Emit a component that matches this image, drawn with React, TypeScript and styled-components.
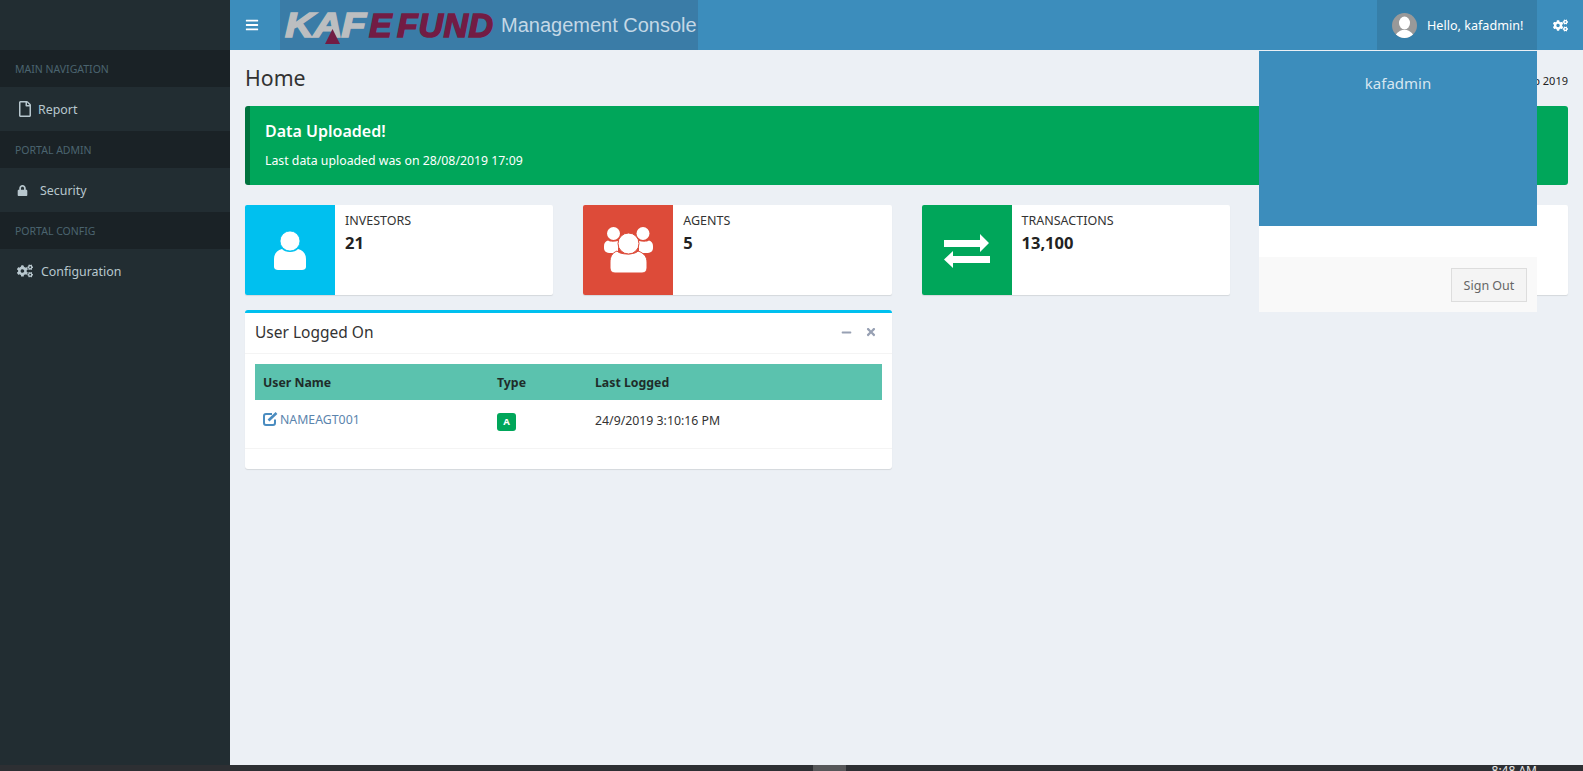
import React from "react";
import styled, { createGlobalStyle } from "styled-components";
import { FaBars, FaCogs, FaLock, FaMinus, FaRegFile, FaTimes } from "react-icons/fa";

const Global = createGlobalStyle`
  html, body { margin: 0; padding: 0; height: 100%; overflow: hidden; }
  body {
    font-family: "Noto Sans", "Open Sans", sans-serif;
    font-size: 13px;
    color: #333;
    background: #ecf0f5;
  }
  * { box-sizing: border-box; }
`;

const Page = styled.div`
  width: 1583px;
  height: 771px;
  display: flex;
  flex-direction: column;
  overflow: hidden;
`;

const Shell = styled.div`
  flex: 1;
  min-height: 0;
  display: grid;
  grid-template-columns: 230px 1fr;
`;

const Sidebar = styled.aside`
  background: #222d32;
  padding-top: 50px;
`;

const NavHeader = styled.div`
  height: 37px;
  padding: 1px 0 0 15px;
  background: #1a2226;
  color: #4b646f;
  font-size: 10.5px;
  line-height: 36px;
`;

const NavItem = styled.a<{ $gap: number }>`
  height: 44px;
  display: flex;
  align-items: center;
  gap: ${(p) => p.$gap}px;
  padding-left: 17px;
  color: #b8c7ce;
  font-size: 12.4px;
  svg { flex: none; }
`;

const Main = styled.div`
  display: flex;
  flex-direction: column;
  min-width: 0;
`;

const Navbar = styled.header`
  height: 50px;
  background: #3c8dbc;
  display: flex;
  align-items: stretch;
  color: #fff;
`;

const Toggle = styled.div`
  width: 50px;
  padding-right: 7px;
  display: flex;
  align-items: center;
  justify-content: center;
`;

const Logo = styled.div`
  width: 418px;
  background: #3a7ca7;
  display: flex;
  align-items: center;
  position: relative;
  font-family: "Liberation Sans", Arial, sans-serif;
`;

const LogoKaf = styled.span`
  flex: none;
  margin-left: 5px;
  font-size: 35px;
  font-weight: 700;
  font-style: italic;
  line-height: 50px;
  letter-spacing: -1px;
  color: #bcbec0;
  -webkit-text-stroke: 1.5px #bcbec0;
  transform: scaleX(1.16);
  transform-origin: left center;
  width: 84px;
`;

const LogoFund = styled.span`
  flex: none;
  font-size: 34px;
  font-weight: 700;
  font-style: italic;
  line-height: 50px;
  letter-spacing: 0.5px;
  word-spacing: -5px;
  color: #721c44;
  -webkit-text-stroke: 1.5px #721c44;
  white-space: nowrap;
  width: 132px;
`;

const LogoMark = styled.svg`
  position: absolute;
  left: 45px;
  top: 29px;
`;

const LogoTitle = styled.span`
  font-size: 20px;
  color: #c4d8e6;
  white-space: nowrap;
`;

const Spacer = styled.div`
  flex: 1;
`;

const UserMenu = styled.div`
  width: 160px;
  background: #367fa9;
  position: relative;
  display: flex;
  align-items: center;
  padding-left: 15px;
  gap: 10px;
  font-size: 12.6px;
`;

const Avatar = styled.svg`
  width: 25px;
  height: 25px;
  border-radius: 50%;
  background: #999;
  flex: none;
`;

const Dropdown = styled.div`
  position: absolute;
  top: 51px;
  right: 0;
  width: 278px;
  z-index: 10;
  color: #333;
`;

const DropHead = styled.div`
  height: 175px;
  background: #3c8dbc;
  color: rgba(255, 255, 255, 0.8);
  font-size: 15px;
  text-align: center;
  padding-top: 21px;
  line-height: 22px;
`;

const DropBody = styled.div`
  height: 31px;
  background: #fff;
`;

const DropFoot = styled.div`
  height: 55px;
  background: #f9f9f9;
  padding: 11px 10px;
  display: flex;
  justify-content: flex-end;
`;

const SignOut = styled.button`
  width: 76px;
  height: 34px;
  background: #f4f4f4;
  border: 1px solid #ddd;
  color: #666;
  font: inherit;
  font-size: 12.5px;
  padding: 0;
`;

const Settings = styled.div`
  width: 46px;
  display: flex;
  align-items: center;
  justify-content: center;
`;

const Content = styled.main`
  flex: 1;
  padding: 15px 15px 0;
`;

const TitleRow = styled.div`
  display: flex;
  justify-content: space-between;
  align-items: flex-start;
  height: 41px;
`;

const PageTitle = styled.h1`
  margin: 0;
  font-size: 21.3px;
  font-weight: 400;
  line-height: 26px;
  color: #333;
`;

const Crumb = styled.div`
  font-size: 11px;
  color: #222;
  line-height: 32px;
`;

const Alert = styled.section`
  height: 79px;
  background: #00a65a;
  border-left: 5px solid #00733e;
  border-radius: 3px;
  padding: 15px;
  color: #fff;
`;

const AlertTitle = styled.h4`
  margin: 0 0 11px;
  font-size: 16px;
  font-weight: 600;
  line-height: 20px;
`;

const AlertText = styled.p`
  margin: 0;
  font-size: 12.3px;
  line-height: 18px;
`;

const Stats = styled.div`
  display: grid;
  grid-template-columns: repeat(4, 1fr);
  gap: 30px;
  margin-top: 20px;
`;

const Stat = styled.div`
  height: 90px;
  background: #fff;
  display: flex;
  border-radius: 2px;
  box-shadow: 0 1px 1px rgba(0, 0, 0, 0.1);
`;

const StatIcon = styled.div<{ $bg: string }>`
  width: 90px;
  background: ${(p) => p.$bg};
  border-radius: 2px 0 0 2px;
  display: flex;
  align-items: center;
  justify-content: center;
  color: #fff;
`;

const StatBody = styled.div`
  padding: 6px 10px;
`;

const StatLabel = styled.div`
  font-size: 12.5px;
  line-height: 20px;
  color: #333;
`;

const StatValue = styled.div`
  font-size: 16.5px;
  font-weight: 700;
  line-height: 24px;
  color: #222;
`;

const Panel = styled.section`
  width: 647px;
  height: 159px;
  margin-top: 15px;
  background: #fff;
  border-top: 3px solid #00c0ef;
  border-radius: 3px;
  box-shadow: 0 1px 1px rgba(0, 0, 0, 0.1);
`;

const PanelHead = styled.div`
  height: 41px;
  padding: 0 15px 2px 10px;
  display: flex;
  align-items: center;
  justify-content: space-between;
  border-bottom: 1px solid #f4f4f4;
`;

const PanelTitle = styled.h3`
  margin: 0;
  font-size: 15.5px;
  font-weight: 400;
  color: #333;
`;

const PanelTools = styled.div`
  display: flex;
  align-items: center;
  gap: 13px;
  color: #97a0b3;
`;

const PanelBody = styled.div`
  padding: 10px 10px 0;
  border-bottom: 1px solid #f4f4f4;
`;

const Table = styled.table`
  width: 100%;
  border-collapse: collapse;
  table-layout: fixed;
  font-size: 12.3px;
`;

const Th = styled.th<{ $w?: number }>`
  ${(p) => (p.$w ? `width: ${p.$w}px;` : "")}
  height: 36px;
  padding: 0 8px;
  background: #5bc2ae;
  color: #1f2d2a;
  text-align: left;
  font-weight: 700;
`;

const Td = styled.td`
  height: 48px;
  padding: 0 8px 7px;
  color: #333;
`;

const UserLink = styled.a`
  color: #5b84ad;
  display: inline-flex;
  align-items: center;
  gap: 2px;
  svg { color: #4a8cc0; }
`;

const Badge = styled.span`
  display: inline-block;
  width: 19px;
  height: 18px;
  line-height: 18px;
  margin-top: 3px;
  text-align: center;
  background: #00a65a;
  color: #fff;
  font-size: 9.5px;
  font-weight: 700;
  border-radius: 3px;
`;

const Taskbar = styled.footer`
  height: 6px;
  flex: none;
  background: #2d2f33;
  display: flex;
  overflow: hidden;
`;

const TaskActive = styled.div`
  width: 33px;
  margin-left: 813px;
  background: #565759;
`;

const TaskClock = styled.div`
  margin-left: auto;
  margin-right: 46px;
  color: #e8e8e8;
  font-size: 12px;
  line-height: 14px;
  margin-top: -1px;
  white-space: nowrap;
`;

const PersonIcon = () => (
  <svg width="32" height="39" viewBox="0 0 32 39" fill="#fff">
    <path d="M8 18 C11 22 21 22 24 18 C29 19 32 23 32 28 L32 36 C32 38 30 39 28 39 L4 39 C2 39 0 38 0 36 L0 28 C0 23 3 19 8 18 Z" />
    <circle cx="16" cy="10" r="10" stroke="#00c0ef" strokeWidth="0.8" />
  </svg>
);

const PeopleIcon = () => (
  <svg width="49" height="46" viewBox="0 0 49 46" fill="#fff">
    <circle cx="9.5" cy="6.5" r="6.5" />
    <circle cx="39" cy="6.5" r="6.5" />
    <path d="M4 13.5 C6 15 10 15 14 14 L14 26 L7 26 C2 26 0 24 0 21 L0 19 C0 16 1.5 14.5 4 13.5 Z" />
    <path d="M45 13.5 C43 15 39 15 35 14 L35 26 L42 26 C47 26 49 24 49 21 L49 19 C49 16 47.5 14.5 45 13.5 Z" />
    <path d="M13 24 C16 28 31 28 34 24 C40 26 43 30 43 35 L43 41 C43 44 41 46 38 46 L11 46 C8 46 6 44 6 41 L6 35 C6 30 8 26 13 24 Z" stroke="#dd4b39" strokeWidth="1" />
    <circle cx="24.5" cy="16.5" r="10.5" stroke="#dd4b39" strokeWidth="1" />
  </svg>
);

const ExchangeSvg = styled.svg`
  margin-top: 2px;
`;

const ExchangeIcon = () => (
  <ExchangeSvg width="46" height="34" viewBox="0 0 46 34" fill="#fff">
    <path d="M0 6 H36 V0 L45 9 L36 18 V13 H0 Z" />
    <path d="M46 22 H9 V17 L0 25.5 L9 34 V29 H46 Z" />
  </ExchangeSvg>
);

const EditIcon = () => (
  <svg width="15" height="14" viewBox="0 0 15 14" fill="none" stroke="currentColor">
    <path d="M9 2 H3 C1.8 2 1 2.8 1 4 V11 C1 12.2 1.8 13 3 13 H10 C11.2 13 12 12.2 12 11 V7.5" strokeWidth="2" />
    <path d="M5.5 8.5 L13.5 1" strokeWidth="2.6" />
  </svg>
);

const App = () => {
  return (
    <Page>
      <Global />
      <Shell>
        <Sidebar>
          <NavHeader>MAIN NAVIGATION</NavHeader>
          <NavItem $gap={5}>
            <FaRegFile size={16} />
            Report
          </NavItem>
          <NavHeader>PORTAL ADMIN</NavHeader>
          <NavItem $gap={12}>
            <FaLock size={11} />
            Security
          </NavItem>
          <NavHeader>PORTAL CONFIG</NavHeader>
          <NavItem $gap={8}>
            <FaCogs size={16} />
            Configuration
          </NavItem>
        </Sidebar>
        <Main>
          <Navbar>
            <Toggle>
              <FaBars size={14} />
            </Toggle>
            <Logo>
              <LogoKaf>KAF</LogoKaf>
              <LogoFund>E FUND</LogoFund>
              <LogoMark width="15" height="15" viewBox="0 0 15 15">
                <path d="M7.5 0 L15 15 L0 15 Z" fill="#721c44" />
              </LogoMark>
              <LogoTitle>Management Console</LogoTitle>
            </Logo>
            <Spacer />
            <UserMenu>
              <Avatar viewBox="0 0 25 25">
                <ellipse cx="12.5" cy="10" rx="5.5" ry="6.5" fill="#fff" />
                <path d="M3 25 C4 19 8 18 10 17 L15 17 C17 18 21 19 22 25 Z" fill="#fff" />
              </Avatar>
              Hello, kafadmin!
              <Dropdown>
                <DropHead>kafadmin</DropHead>
                <DropBody />
                <DropFoot>
                  <SignOut>Sign Out</SignOut>
                </DropFoot>
              </Dropdown>
            </UserMenu>
            <Settings>
              <FaCogs size={15} />
            </Settings>
          </Navbar>
          <Content>
            <TitleRow>
              <PageTitle>Home</PageTitle>
              <Crumb>24 Sep 2019</Crumb>
            </TitleRow>
            <Alert>
              <AlertTitle>Data Uploaded!</AlertTitle>
              <AlertText>Last data uploaded was on 28/08/2019 17:09</AlertText>
            </Alert>
            <Stats>
              <Stat>
                <StatIcon $bg="#00c0ef">
                  <PersonIcon />
                </StatIcon>
                <StatBody>
                  <StatLabel>INVESTORS</StatLabel>
                  <StatValue>21</StatValue>
                </StatBody>
              </Stat>
              <Stat>
                <StatIcon $bg="#dd4b39">
                  <PeopleIcon />
                </StatIcon>
                <StatBody>
                  <StatLabel>AGENTS</StatLabel>
                  <StatValue>5</StatValue>
                </StatBody>
              </Stat>
              <Stat>
                <StatIcon $bg="#00a65a">
                  <ExchangeIcon />
                </StatIcon>
                <StatBody>
                  <StatLabel>TRANSACTIONS</StatLabel>
                  <StatValue>13,100</StatValue>
                </StatBody>
              </Stat>
              <Stat />
            </Stats>
            <Panel>
              <PanelHead>
                <PanelTitle>User Logged On</PanelTitle>
                <PanelTools>
                  <FaMinus size={11} />
                  <FaTimes size={12} />
                </PanelTools>
              </PanelHead>
              <PanelBody>
                <Table>
                  <thead>
                    <tr>
                      <Th $w={234}>User Name</Th>
                      <Th $w={98}>Type</Th>
                      <Th>Last Logged</Th>
                    </tr>
                  </thead>
                  <tbody>
                    <tr>
                      <Td>
                        <UserLink>
                          <EditIcon />
                          NAMEAGT001
                        </UserLink>
                      </Td>
                      <Td>
                        <Badge>A</Badge>
                      </Td>
                      <Td>24/9/2019 3:10:16 PM</Td>
                    </tr>
                  </tbody>
                </Table>
              </PanelBody>
            </Panel>
          </Content>
        </Main>
      </Shell>
      <Taskbar>
        <TaskActive />
        <TaskClock>8:48 AM</TaskClock>
      </Taskbar>
    </Page>
  );
};

export default App;
